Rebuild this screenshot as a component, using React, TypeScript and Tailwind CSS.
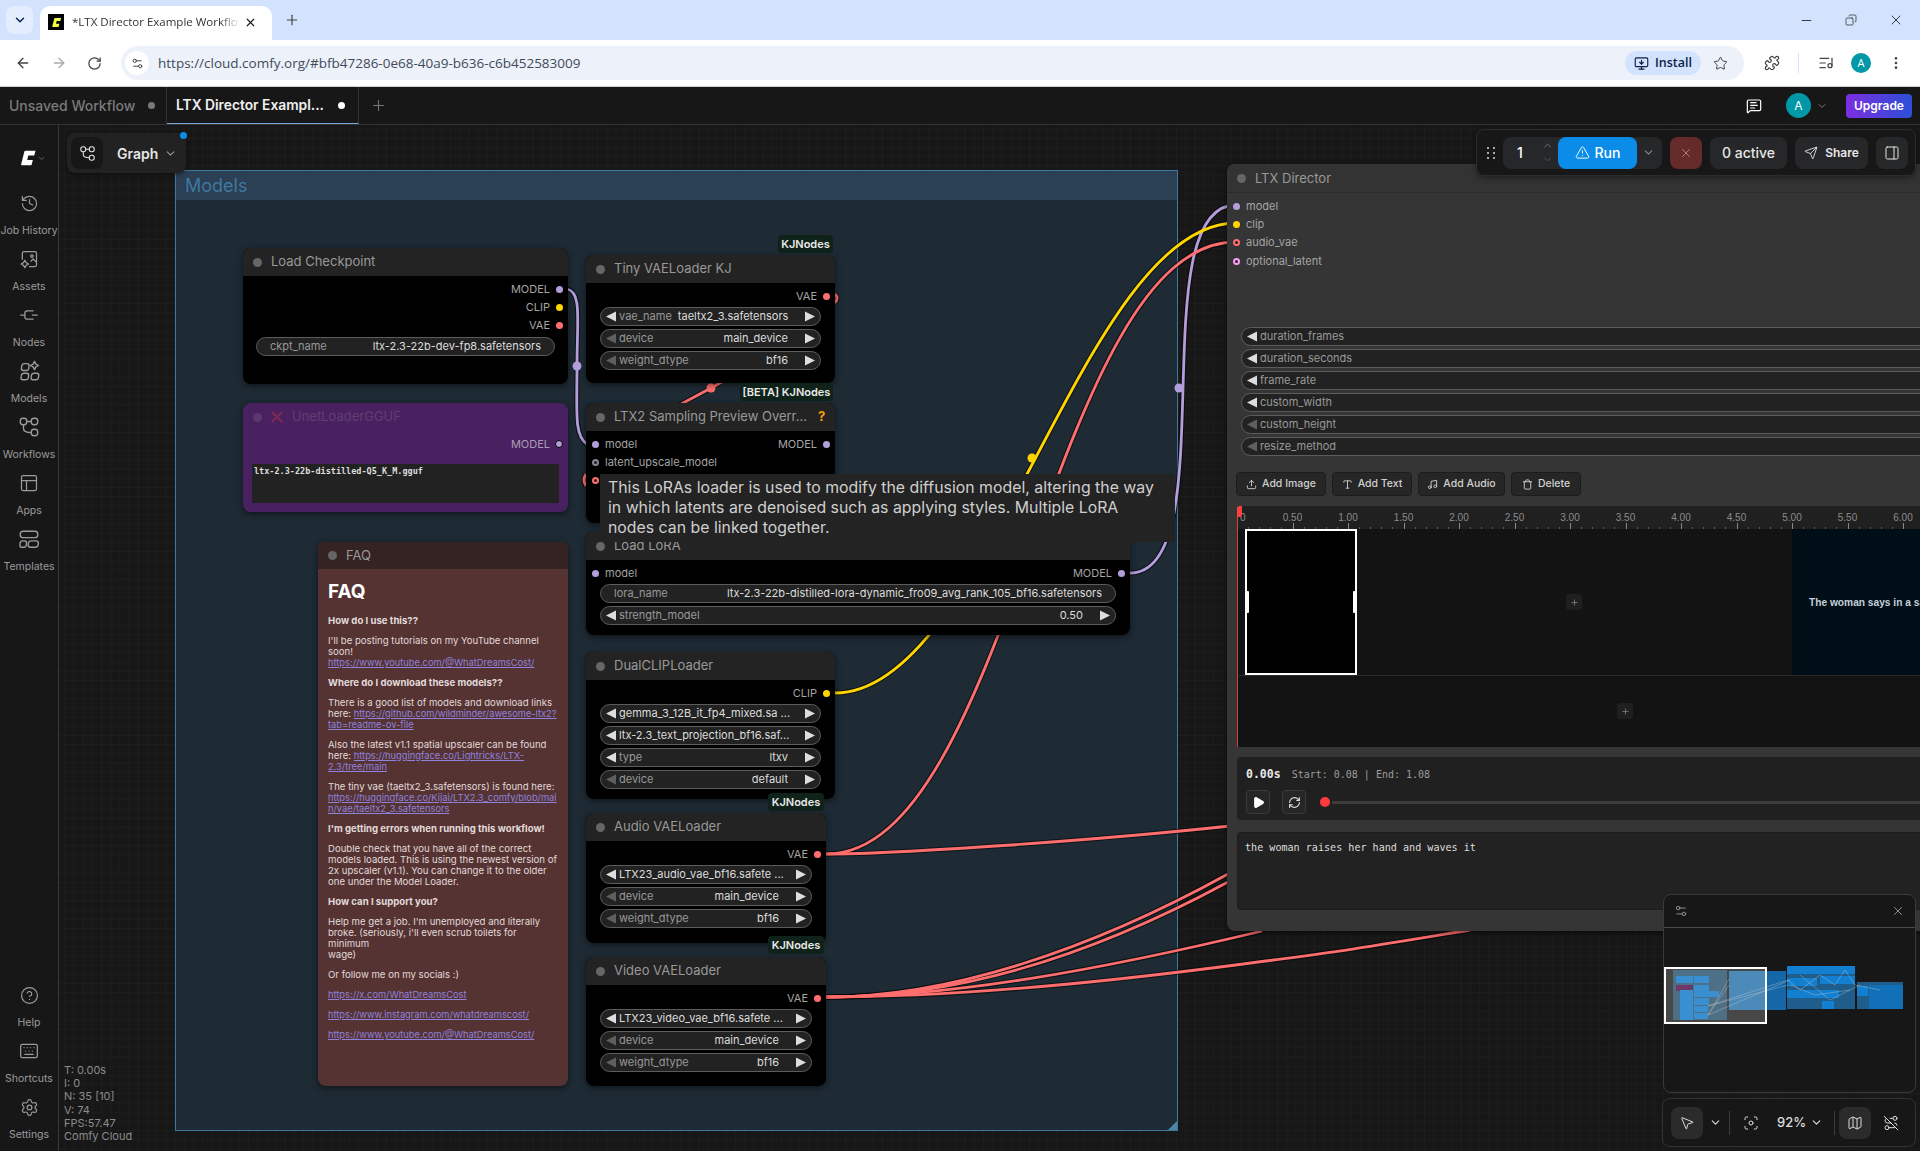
import type { ReactNode } from "react";
import {
  ArrowLeft,
  ArrowRight,
  ChevronDown,
  ChevronUp,
  CircleHelp,
  Copy,
  EllipsisVertical,
  Focus,
  History,
  Keyboard,
  ListMusic,
  Map as MapIcon,
  MessageSquareText,
  Minus,
  MonitorDown,
  MousePointer2,
  Music,
  PanelRight,
  PanelsTopLeft,
  Play,
  Plus,
  Puzzle,
  RefreshCw,
  RotateCw,
  RouteOff,
  Send,
  Settings,
  Settings2,
  Star,
  Trash,
  TriangleAlert,
  Type,
  Upload,
  X,
} from "lucide-react";

const C = {
  model: "#b39ddb",
  clip: "#ffd500",
  vae: "#ff6e6e",
  latent: "#ff9cf9",
  none: "#8a8494",
};

function ComfyLogo({ className, fill }: { className: string; fill: string }) {
  return (
    <svg viewBox="0 0 20 20" className={className} fill={fill}>
      <path d="M7.4 2h11l-1.5 5.3h-6.6l-1.2 5h6.3l-1.4 5.1q-.2.6-.9.6H3.2q-1 0-.8-1L5.9 3q.3-1 1.5-1z" />
    </svg>
  );
}

function WorkflowIcon({ className }: { className: string }) {
  return (
    <svg viewBox="0 0 24 24" className={className} fill="none" stroke="currentColor" strokeWidth={1.5}>
      <rect x="2.5" y="2.5" width="7" height="7" rx="3" />
      <rect x="14.5" y="2.5" width="7" height="7" rx="3" />
      <rect x="14.5" y="14.5" width="7" height="7" rx="3" />
      <path d="M9.5 6h5M6 9.5v4c0 3 2 4.5 8.5 4.5" />
    </svg>
  );
}

function AssetsIcon({ className }: { className: string }) {
  return (
    <svg viewBox="0 0 24 24" className={className} fill="none" stroke="currentColor" strokeWidth={1.5} strokeLinejoin="round">
      <path d="M4 13V5a2 2 0 0 1 2-2h13a2 2 0 0 1 2 2v14a2 2 0 0 1-2 2h-7" />
      <circle cx="15.5" cy="8.5" r="1.5" />
      <path d="M14 15l3-3 4 4" />
      <path d="M7 13.5l1.6 2.9L11.5 18l-2.9 1.6L7 22.5l-1.6-2.9L2.5 18l2.9-1.6z" />
    </svg>
  );
}

function NodesIcon({ className }: { className: string }) {
  return (
    <svg viewBox="0 0 24 24" className={className} fill="none" stroke="currentColor" strokeWidth={1.5} strokeLinecap="round">
      <path d="M2 12h5M16 12h6" />
      <path d="M17 7h-7q-3 0-3 3v4q0 3 3 3h7" />
    </svg>
  );
}

function ModelsIcon({ className }: { className: string }) {
  return (
    <svg viewBox="0 0 24 24" className={className} fill="none" stroke="currentColor" strokeWidth={1.5} strokeLinejoin="round">
      <rect x="3" y="4" width="8" height="7.5" rx="2.5" transform="skewX(-8) translate(2 0)" />
      <rect x="3" y="14.5" width="8" height="7" rx="2.5" transform="skewX(-8) translate(3 0)" />
      <rect x="14" y="14.5" width="8" height="7" rx="2.5" transform="skewX(-8) translate(3 0)" />
      <path d="M18 1.5l1.5 3 3 1.5-3 1.5-1.5 3-1.5-3-3-1.5 3-1.5z" />
    </svg>
  );
}

function TemplatesIcon({ className }: { className: string }) {
  return (
    <svg viewBox="0 0 24 24" className={className} fill="none" stroke="currentColor" strokeWidth={1.5}>
      <rect x="2.5" y="3.5" width="19" height="7" rx="3" />
      <rect x="2" y="14" width="7" height="7" rx="2.5" transform="skewX(-6) translate(2 0)" />
      <rect x="11" y="14" width="11" height="7" rx="3" transform="skewX(-6) translate(2 0)" />
    </svg>
  );
}

const SIDE_TOP = [
  { label: "Job History", icon: <History className="size-[19px]" strokeWidth={1.5} /> },
  { label: "Assets", icon: <AssetsIcon className="size-[20px]" /> },
  { label: "Nodes", icon: <NodesIcon className="size-[20px]" /> },
  { label: "Models", icon: <ModelsIcon className="size-[22px]" /> },
  { label: "Workflows", icon: <WorkflowIcon className="size-[22px]" /> },
  { label: "Apps", icon: <PanelsTopLeft className="size-[20px]" strokeWidth={1.5} /> },
  { label: "Templates", icon: <TemplatesIcon className="size-[22px]" /> },
];

const SIDE_BOTTOM = [
  { label: "Help", icon: <CircleHelp className="size-[19px]" strokeWidth={1.5} /> },
  { label: "Shortcuts", icon: <Keyboard className="size-[20px]" strokeWidth={1.5} /> },
  { label: "Settings", icon: <Settings className="size-[19px]" strokeWidth={1.5} /> },
];

function SideItem({ label, icon }: { label: string; icon: ReactNode }) {
  return (
    <div className="flex h-[56px] w-full flex-col items-center text-[#9b9b9b]">
      <div className="flex h-[24px] items-center justify-center">{icon}</div>
      <span className="mt-[9px] whitespace-nowrap text-[10.5px] leading-[14px]">{label}</span>
    </div>
  );
}

function Sidebar() {
  return (
    <div className="relative z-30 flex h-full w-[59px] shrink-0 flex-col border-r border-[#3a3a3a] bg-[#171718]">
      <div className="flex h-[66px] items-start justify-center pl-[6px] pt-[24px] text-[#777]">
        <ComfyLogo className="size-[18px]" fill="#fff" />
        <ChevronDown className="mt-[5px] size-[9px]" />
      </div>
      {SIDE_TOP.map((item) => (
        <SideItem key={item.label} {...item} />
      ))}
      <div className="mt-auto">
        {SIDE_BOTTOM.map((item) => (
          <SideItem key={item.label} {...item} />
        ))}
      </div>
    </div>
  );
}

function spline(x1: number, y1: number, x2: number, y2: number) {
  const d = Math.hypot(x2 - x1, y2 - y1) * 0.25;
  return `M${x1} ${y1} C${x1 + d} ${y1} ${x2 - d} ${y2} ${x2} ${y2}`;
}

const LINKS: { d: string; color: string }[] = [
  { d: "M567 289 C582 292 577 320 577 366 C577 412 574 436 587 444", color: C.model },
  { d: "M672 409 L711 388 L722 382", color: C.vae },
  { d: "M835 294 Q839 298 835 303", color: C.vae },
  { d: "M586 474 Q582 480 586 486", color: C.vae },
  { d: spline(1130, 573, 1236, 205), color: C.model },
  { d: spline(835, 693, 1236, 223), color: C.clip },
  { d: spline(826, 854, 1236, 242), color: C.vae },
  { d: "M826 854 C900 854 1100 840 1230 826", color: C.vae },
  { d: "M826 997 C950 997 1090 950 1228 874", color: C.vae },
  { d: "M826 997 C950 997 1080 962 1228 882", color: C.vae },
  { d: "M826 997 C950 997 1100 970 1262 931", color: C.vae },
  { d: "M826 997 C950 997 1080 985 1220 967 S1380 945 1470 930", color: C.vae },
];

const DOTS = [
  { x: 577, y: 366, color: C.model },
  { x: 711, y: 388, color: C.vae },
  { x: 1032, y: 458, color: C.clip },
  { x: 1179, y: 388, color: C.model },
];

function Links() {
  return (
    <svg viewBox="0 0 1920 1151" className="absolute inset-0 h-full w-full" fill="none">
      {LINKS.map((l, i) => (
        <path key={`o${i}`} d={l.d} stroke="#000" strokeOpacity={0.55} strokeWidth={5} />
      ))}
      {LINKS.map((l, i) => (
        <path key={`c${i}`} d={l.d} stroke={l.color} strokeWidth={2.8} />
      ))}
      {DOTS.map((p) => (
        <circle key={p.x} cx={p.x} cy={p.y} r={4.5} fill={p.color} />
      ))}
    </svg>
  );
}

function Tri({ dir, on = true }: { dir: "l" | "r"; on?: boolean }) {
  return (
    <svg viewBox="0 0 9 10" className="h-[11px] w-[10px] shrink-0" fill={on ? "#ddd" : "#5f5f5f"} preserveAspectRatio="none">
      <path d={dir === "l" ? "M9 0.5V9.5L0 5z" : "M0 0.5V9.5L9 5z"} />
    </svg>
  );
}

function Widget({
  label,
  value,
  leftOn = true,
  arrows = true,
}: {
  label?: string;
  value: string;
  leftOn?: boolean;
  arrows?: boolean;
}) {
  if (!arrows) {
    return (
      <div className="flex h-[19px] items-center justify-between rounded-full border border-[#5c5c5c] bg-[#222] px-[13px] text-[11px] leading-none">
        <span className="shrink-0 text-[#999]">{label}</span>
        <span className="whitespace-nowrap text-[#ddd]">{value}</span>
      </div>
    );
  }
  return (
    <div className="flex h-[19px] items-center rounded-full border border-[#5c5c5c] bg-[#222] px-[5px] text-[11px] leading-none">
      <Tri dir="l" on={leftOn} />
      {label ? (
        <>
          <span className="shrink-0 whitespace-nowrap pl-[3px] text-[#999]">{label}</span>
          <span className="ml-auto whitespace-nowrap pl-[6px] pr-[17px] text-[#ddd]">{value}</span>
        </>
      ) : (
        <span className="min-w-0 flex-1 whitespace-nowrap pl-[3px] text-[#ddd]">{value}</span>
      )}
      <Tri dir="r" />
    </div>
  );
}

function Slot({ color, hollow = false }: { color: string; hollow?: boolean }) {
  return (
    <span className="flex size-[7px] shrink-0 items-center justify-center rounded-full" style={{ backgroundColor: color }}>
      {hollow ? <span className="size-[3px] rounded-full bg-[#222]" /> : null}
    </span>
  );
}

function Row({ left, leftColor, leftHollow, right, rightColor }: { left?: string; leftColor?: string; leftHollow?: boolean; right?: string; rightColor?: string }) {
  return (
    <div className="flex h-[18.3px] items-center justify-between pl-[6px] pr-[5px] text-[11px] text-[#a4a4a4]">
      {left ? (
        <div className="flex items-center gap-[6px]">
          <Slot color={leftColor ?? C.model} hollow={leftHollow} />
          <span>{left}</span>
        </div>
      ) : (
        <span />
      )}
      {right ? (
        <div className="flex items-center gap-[6px]">
          <span>{right}</span>
          <Slot color={rightColor ?? C.model} />
        </div>
      ) : null}
    </div>
  );
}

function GraphNode({ className, title, badge, children }: { className: string; title: ReactNode; badge?: ReactNode; children: ReactNode }) {
  return (
    <div className={`absolute overflow-hidden rounded-lg bg-black shadow-[0_2px_6px_rgba(0,0,0,0.5)] ${className}`}>
      <div className="flex h-[28px] items-center gap-[9px] whitespace-nowrap bg-[#232323] pl-[10px] text-[13px] text-[#999]">
        <span className="size-[9px] shrink-0 rounded-full bg-[#666]" />
        {title}
        {badge}
      </div>
      <div className="pt-[4px]">{children}</div>
    </div>
  );
}

function Badge({ className, children }: { className: string; children: ReactNode }) {
  return (
    <div className={`absolute flex h-[18px] items-center justify-center rounded bg-[#10231a] text-[11px] font-semibold text-[#e8e8e8] ${className}`}>
      {children}
    </div>
  );
}

function Widgets({ children, className = "mx-[14px]" }: { children: ReactNode; className?: string }) {
  return <div className={`mt-[2px] flex flex-col gap-[3px] ${className}`}>{children}</div>;
}

function Faq() {
  const link = "whitespace-nowrap text-[9.3px] text-[#8f82dd] underline";
  return (
    <div className="absolute left-[318px] top-[542px] h-[544px] w-[250px] overflow-hidden rounded-lg bg-[#553333] shadow-[0_2px_6px_rgba(0,0,0,0.5)]">
      <div className="flex h-[27px] items-center gap-[9px] bg-[#352222] pl-[10px] text-[13px] text-[#999]">
        <span className="size-[9px] rounded-full bg-[#666]" />
        FAQ
      </div>
      <div className="flex flex-col gap-[9px] pl-[10px] pr-[10px] pt-[13px] text-[9.6px] leading-[11px] text-[#e2dada]">
        <h1 className="mb-[4px] text-[19px] font-bold leading-[20px] text-white">FAQ</h1>
        <p className="font-bold">How do I use this??</p>
        <p>
          I'll be posting tutorials on my YouTube channel
          <br />
          soon!
          <br />
          <span className={link}>https://www.youtube.com/@WhatDreamsCost/</span>
        </p>
        <p className="font-bold">Where do I download these models??</p>
        <p>
          There is a good list of models and download links
          <br />
          here: <span className={link}>https://github.com/wildminder/awesome-ltx2?</span>
          <br />
          <span className={link}>tab=readme-ov-file</span>
        </p>
        <p>
          Also the latest v1.1 spatial upscaler can be found
          <br />
          here: <span className={link}>https://huggingface.co/Lightricks/LTX-</span>
          <br />
          <span className={link}>2.3/tree/main</span>
        </p>
        <p>
          The tiny vae (taeltx2_3.safetensors) is found here:
          <br />
          <span className={link}>https://huggingface.co/Kijai/LTX2.3_comfy/blob/mai</span>
          <br />
          <span className={link}>n/vae/taeltx2_3.safetensors</span>
        </p>
        <p className="font-bold">I'm getting errors when running this workflow!</p>
        <p>
          Double check that you have all of the correct
          <br />
          models loaded. This is using the newest version of
          <br />
          2x upscaler (v1.1). You can change it to the older
          <br />
          one under the Model Loader.
        </p>
        <p className="font-bold">How can I support you?</p>
        <p>
          Help me get a job. I'm unemployed and literally
          <br />
          broke. (seriously, i'll even scrub toilets for minimum
          <br />
          wage)
        </p>
        <p>Or follow me on my socials :)</p>
        <p className={link}>https://x.com/WhatDreamsCost</p>
        <p className={link}>https://www.instagram.com/whatdreamscost/</p>
        <p className={link}>https://www.youtube.com/@WhatDreamsCost/</p>
      </div>
    </div>
  );
}

const DIRECTOR_WIDGETS: { label: string; on: boolean }[] = [
  { label: "duration_frames", on: true },
  { label: "duration_seconds", on: true },
  { label: "frame_rate", on: true },
  { label: "custom_width", on: true },
  { label: "custom_height", on: false },
  { label: "resize_method", on: false },
];

const RULER = Array.from({ length: 61 }, (_, i) => i);

function ToolBtn({ icon, label, className }: { icon: ReactNode; label: string; className: string }) {
  return (
    <div className={`flex h-[24px] items-center justify-center gap-[5px] rounded border border-[#1c1c1c] bg-[#262626] text-[10.5px] font-medium text-[#cfcfcf] ${className}`}>
      {icon}
      {label}
    </div>
  );
}

function Timeline() {
  return (
    <div className="relative mt-[10px] h-[241px] w-[1000px] overflow-hidden rounded-t-[3px] bg-[#131313]">
      <div className="relative h-[23px] bg-[#202020] font-['Liberation_Sans',sans-serif] text-[10px] text-[#8c8c8c]">
        {RULER.map((i) => (
          <div key={i}>
            <span className={`absolute bottom-0 w-px ${i % 5 === 0 ? "h-[6px] bg-[#8a8a8a]" : "h-[2px] bg-[#5a5a5a]"}`} style={{ left: i * 11.1 }} />
            {i % 5 === 0 ? (
              <span className={`absolute top-[4px] ${i === 0 ? "left-[3px]" : "-translate-x-1/2"}`} style={i === 0 ? undefined : { left: i * 11.1 }}>
                {i === 0 ? "0" : (i / 10).toFixed(2)}
              </span>
            ) : null}
          </div>
        ))}
      </div>
      <div className="relative h-[147px] border-b border-[#2a2a2a]">
        <div className="absolute bottom-0 left-[8px] top-0 w-[112px] border-2 border-white bg-black">
          <span className="absolute -left-[1px] top-[60px] h-[22px] w-[3px] rounded-[1px] bg-white" />
          <span className="absolute -right-[1px] top-[60px] h-[22px] w-[3px] rounded-[1px] bg-white" />
        </div>
        <div className="absolute left-[329px] top-[65px] flex size-[16px] items-center justify-center rounded-[3px] bg-[#1f1f1f] text-[#888]">
          <Plus className="size-[9px]" />
        </div>
        <div className="absolute bottom-0 left-[555px] top-0 flex w-[300px] items-center border-l border-[#0a0a0a] bg-[#000f17] pl-[16px] font-['Liberation_Sans',sans-serif] text-[10.2px] font-bold text-[#c5cfdb]">
          The woman says in a sad
        </div>
      </div>
      <div className="relative h-[71px]">
        <div className="absolute left-[380px] top-[27px] flex size-[16px] items-center justify-center rounded-[3px] bg-[#1f1f1f] text-[#888]">
          <Plus className="size-[9px]" />
        </div>
      </div>
      <div className="absolute bottom-0 left-0 top-0 w-px bg-[#e03a3a]" />
      <div className="absolute left-0 top-0 h-[11px] w-[5px] rounded-br-[3px] bg-[#ff4040]" />
    </div>
  );
}

function Director() {
  return (
    <div className="absolute left-[1227px] top-[164px] h-[767px] w-[1000px] overflow-hidden rounded-lg bg-[#353535] shadow-[0_2px_6px_rgba(0,0,0,0.5)]">
      <div className="flex h-[29px] items-center gap-[9px] border-b border-[#2c2c2c] bg-[#333] pl-[10px] pt-[1px] text-[13px] text-[#999]">
        <span className="size-[9px] rounded-full bg-[#666]" />
        LTX Director
      </div>
      <div className="pt-[4px]">
        <Row left="model" leftColor={C.model} />
        <Row left="clip" leftColor={C.clip} />
        <Row left="audio_vae" leftColor={C.vae} leftHollow />
        <Row left="optional_latent" leftColor={C.latent} leftHollow />
      </div>
      <div className="ml-[14px] mt-[57px] flex flex-col gap-[3px]">
        {DIRECTOR_WIDGETS.map((w) => (
          <div key={w.label} className="flex h-[19px] items-center gap-[3px] rounded-full border border-[#5c5c5c] bg-[#222] pl-[5px] text-[11px] text-[#999]">
            <Tri dir="l" on={w.on} />
            {w.label}
          </div>
        ))}
      </div>
      <div className="ml-[9px] mt-[16px] flex gap-[6px]">
        <ToolBtn className="w-[90px]" label="Add Image" icon={<Upload className="size-[11px]" />} />
        <ToolBtn className="w-[80px]" label="Add Text" icon={<Type className="size-[11px]" />} />
        <ToolBtn className="w-[87px]" label="Add Audio" icon={<Music className="size-[11px]" />} />
        <ToolBtn className="w-[70px]" label="Delete" icon={<Trash className="size-[11px]" />} />
      </div>
      <div className="ml-[10px]">
        <Timeline />
        <div className="mt-[10px] h-[63px] rounded bg-[#202020] pl-[9px] pt-[9px] font-['DejaVu_Sans_Mono',monospace]">
          <div className="flex items-baseline gap-[11px] text-[#9c9c9c]">
            <span className="text-[11.5px] font-bold text-[#e8e8e8]">0.00s</span>
            <span className="text-[10px]">Start: 0.08 | End: 1.08</span>
          </div>
          <div className="mt-[7px] flex items-center">
            <div className="flex h-[24px] w-[24px] items-center justify-center rounded border border-[#3a3a3a] bg-[#262626]">
              <Play className="size-[13px]" fill="#fff" color="#fff" />
            </div>
            <div className="ml-[12px] flex h-[24px] w-[24px] items-center justify-center rounded border border-[#3a3a3a] bg-[#262626] text-[#ddd]">
              <RefreshCw className="size-[13px]" />
            </div>
            <span className="ml-[14px] size-[10px] rounded-full bg-[#ff3b3b]" />
            <span className="ml-[2px] h-[3px] flex-1 bg-[#3c3c3c]" />
          </div>
        </div>
        <div className="mt-[12px] h-[78px] rounded border border-[#1c1c1c] bg-[#222] pl-[7px] pt-[7px] font-['DejaVu_Sans_Mono',monospace] text-[10.1px] text-[#ddd]">
          the woman raises her hand and waves it
        </div>
      </div>
    </div>
  );
}

function MiniMap() {
  return (
    <div className="absolute left-[1663px] top-[894px] z-20 flex h-[199px] w-[253px] flex-col rounded-lg border border-[#3a3a3a] bg-[#171717]">
      <div className="flex h-[33px] items-center justify-between border-b border-[#4a4a4a] px-[10px] text-[#a0a0a0]">
        <Settings2 className="size-[14px]" strokeWidth={1.5} />
        <X className="size-[14px]" strokeWidth={1.5} />
      </div>
      <svg viewBox="1664 928 251 164" className="flex-1" fill="none">
        <rect x="1665" y="968" width="101" height="55" fill="#474747" />
        <rect x="1673" y="970" width="54" height="50" fill="#4e7087" />
        <rect x="1676" y="976" width="17" height="7" fill="#3a8fd0" />
        <rect x="1694" y="976" width="15" height="7" fill="#3a8fd0" />
        <rect x="1676" y="985" width="17" height="6" fill="#6d3a68" />
        <rect x="1694" y="985" width="15" height="7" fill="#3a8fd0" />
        <rect x="1680" y="991" width="13" height="30" fill="#3a8fd0" transform="translate(0 -1)" />
        <rect x="1694" y="991" width="25" height="6" fill="#3a8fd0" />
        <rect x="1694" y="998" width="15" height="7" fill="#3a8fd0" />
        <rect x="1694" y="1006" width="14" height="6" fill="#3a8fd0" />
        <rect x="1694" y="1013" width="14" height="6" fill="#3a8fd0" />
        <rect x="1729" y="971" width="37" height="39" fill="#4b8ab9" />
        <rect x="1766" y="971" width="20" height="39" fill="#1567a8" />
        <rect x="1787" y="966" width="68" height="43" fill="#1f5d8c" />
        <rect x="1787" y="966" width="68" height="8" fill="#127fd0" />
        <rect x="1787" y="978" width="30" height="8" fill="#127fd0" />
        <rect x="1820" y="976" width="35" height="8" fill="#127fd0" />
        <rect x="1787" y="990" width="52" height="8" fill="#127fd0" />
        <rect x="1822" y="1001" width="12" height="8" fill="#127fd0" />
        <rect x="1857" y="982" width="46" height="27" fill="#1f5d8c" />
        <rect x="1869" y="985" width="34" height="24" fill="#1170b8" />
        <rect x="1857" y="986" width="11" height="10" fill="#127fd0" />
        <g stroke="#d8d8d8" strokeOpacity={0.55} strokeWidth={0.6}>
          <path d="M1708 1015L1729 979M1708 1015L1729 985M1708 1006L1788 980M1708 1015L1790 980M1708 1006L1788 985" />
          <path d="M1788 980L1800 990L1820 975L1835 985L1845 970L1855 985L1880 990M1790 985L1815 995L1850 990M1800 975L1830 1000L1860 985" />
        </g>
        <rect x="1665" y="968" width="101" height="55" stroke="#fff" strokeWidth={2} />
      </svg>
    </div>
  );
}

function CanvasToolbar() {
  return (
    <div className="absolute left-[1662px] top-[1098px] z-20 flex h-[49px] w-[254px] items-center rounded-lg border border-[#333] bg-[#171717] pl-[8px] text-[#ddd]">
      <div className="flex size-[32px] shrink-0 items-center justify-center rounded-lg bg-[#2b2b2b]">
        <MousePointer2 className="size-[16px]" strokeWidth={1.5} />
      </div>
      <ChevronDown className="ml-[5.5px] size-[13px] shrink-0" />
      <span className="ml-[7.5px] h-[24px] w-px shrink-0 bg-[#3a3a3a]" />
      <Focus className="ml-[13px] size-[16px] shrink-0" strokeWidth={1.5} />
      <span className="ml-[18px] w-[27px] text-[13px] font-medium">92%</span>
      <ChevronDown className="ml-[5.5px] size-[13px] shrink-0" />
      <span className="ml-[11px] h-[24px] w-px shrink-0 bg-[#3a3a3a]" />
      <div className="ml-[4px] flex size-[32px] shrink-0 items-center justify-center rounded-lg bg-[#2b2b2b]">
        <MapIcon className="size-[16px]" strokeWidth={1.5} />
      </div>
      <RouteOff className="ml-[12px] size-[16px] shrink-0" strokeWidth={1.5} />
    </div>
  );
}

function RunBar() {
  const chip = "flex h-[32px] items-center justify-center rounded-lg bg-[#262729] text-[#e6e6e6]";
  return (
    <div className="absolute left-[1476px] top-[129px] z-20 flex h-[47px] w-[440px] items-center gap-[8px] rounded-lg border border-[#2c2c2c] bg-[#171717] pl-[10px] shadow-[0_2px_6px_rgba(0,0,0,0.4)]">
      <div className="grid w-[8px] grid-cols-2 gap-x-[3px] gap-y-[3px]">
        {[0, 1, 2, 3, 4, 5].map((i) => (
          <span key={i} className="size-[2px] bg-[#aaa]" />
        ))}
      </div>
      <div className="flex h-[32px] w-[159px] items-center rounded-lg bg-[#262729] text-white">
        <span className="w-[33px] pl-[14px] text-[14px] font-medium">1</span>
        <div className="ml-[4px] flex w-[14px] flex-col items-center text-[#7d7d7d]">
          <ChevronUp className="size-[11px]" />
          <ChevronDown className="mt-[3px] size-[11px] text-[#555]" />
        </div>
        <div className="ml-[4px] flex h-[32px] w-[79px] items-center justify-center gap-[5px] rounded-lg bg-[#0b8ce9] text-[14px] font-medium text-white">
          <TriangleAlert className="size-[15px]" strokeWidth={1.5} />
          Run
        </div>
        <ChevronDown className="ml-[5px] size-[13px] text-[#888]" />
      </div>
      <div className="flex size-[32px] items-center justify-center rounded-lg bg-[#652a2a] text-[#b08a8a]">
        <X className="size-[14px]" strokeWidth={1.5} />
      </div>
      <div className={`${chip} w-[77px] text-[14px] font-medium`}>0 active</div>
      <div className={`${chip} w-[73px] gap-[7px] text-[12px] font-semibold`}>
        <Send className="size-[14px]" strokeWidth={1.5} />
        Share
      </div>
      <div className={`${chip} w-[32px]`}>
        <PanelRight className="size-[16px]" strokeWidth={1.5} />
      </div>
    </div>
  );
}

function Canvas() {
  return (
    <div className="relative flex-1 overflow-hidden bg-[#171717]">
      <div className="absolute left-[-59px] top-[-125px] h-[1151px] w-[1920px] bg-[linear-gradient(#1d1d1d_1px,transparent_1px),linear-gradient(90deg,#1d1d1d_1px,transparent_1px)] bg-[size:9.2px_9.2px]">
        <div className="absolute left-[175px] top-[170px] h-[961px] w-[1003px] border border-[#3f789e] bg-[#1f2c37]/90">
          <div className="h-[29px] bg-[#2b3f55] pl-[9px] text-[18px] leading-[29px] text-[#3f789e]">Models</div>
          <div className="absolute bottom-0 right-0 size-0 border-b-[9px] border-l-[9px] border-b-[#4f85a8] border-l-transparent" />
        </div>

        <Links />

        <GraphNode className="left-[243px] top-[248px] h-[136px] w-[325px]" title="Load Checkpoint">
          <Row right="MODEL" rightColor={C.model} />
          <Row right="CLIP" rightColor={C.clip} />
          <Row right="VAE" rightColor={C.vae} />
          <Widgets className="mx-[13px]">
            <Widget label="ckpt_name" value="ltx-2.3-22b-dev-fp8.safetensors" arrows={false} />
          </Widgets>
        </GraphNode>

        <div className="absolute left-[243px] top-[403px] h-[109px] w-[325px] overflow-hidden rounded-lg bg-[#4a2160] shadow-[0_2px_6px_rgba(0,0,0,0.5)]">
          <div className="flex h-[28px] items-center gap-[6px] pl-[10px] text-[13px] text-[#5e3f72]">
            <span className="size-[9px] rounded-full bg-[#5a3a6c]" />
            <span className="text-[#7b2a55]">
              <X className="size-[18px]" strokeWidth={3} />
            </span>
            UnetLoaderGGUF
          </div>
          <div className="pb-[11px] pt-[4px]">
            <div className="flex h-[18px] items-center justify-end gap-[5px] px-[5px] text-[11px] text-[#a99bb3]">
              MODEL
              <span className="flex size-[8px] rounded-full border border-black bg-[#b39ddb]" />
            </div>
          </div>
          <div className="mx-[9px] h-[39px] bg-[#222] px-[2px] pt-[1px] font-['DejaVu_Sans_Mono',monospace] text-[8.5px] font-bold leading-[12px] text-[#ddd]">
            ltx-2.3-22b-distilled-Q5_K_M.gguf
          </div>
        </div>

        <Faq />

        <Badge className="left-[778px] top-[235px] w-[55px]">KJNodes</Badge>
        <GraphNode className="left-[586px] top-[255px] h-[128px] w-[249px]" title="Tiny VAELoader KJ">
          <Row right="VAE" rightColor={C.vae} />
          <Widgets>
            <Widget label="vae_name" value="taeltx2_3.safetensors" />
            <Widget label="device" value="main_device" leftOn={false} />
            <Widget label="weight_dtype" value="bf16" leftOn={false} />
          </Widgets>
        </GraphNode>

        <Badge className="left-[740px] top-[383px] w-[93px]">[BETA] KJNodes</Badge>
        <GraphNode
          className="left-[586px] top-[403px] h-[120px] w-[249px]"
          title="LTX2 Sampling Preview Overr..."
          badge={<span className="ml-[2px] font-bold text-[#f59e0b]">?</span>}
        >
          <Row left="model" leftColor={C.model} right="MODEL" rightColor={C.model} />
          <Row left="latent_upscale_model" leftColor={C.none} leftHollow />
          <Row left="vae" leftColor={C.vae} leftHollow />
        </GraphNode>

        <GraphNode className="left-[586px] top-[532px] h-[103px] w-[544px]" title="Load LoRA">
          <Row left="model" leftColor={C.model} right="MODEL" rightColor={C.model} />
          <Widgets>
            <Widget label="lora_name" value="ltx-2.3-22b-distilled-lora-dynamic_fro09_avg_rank_105_bf16.safetensors" arrows={false} />
            <Widget label="strength_model" value="0.50" />
          </Widgets>
        </GraphNode>

        <GraphNode className="left-[586px] top-[652px] h-[147px] w-[249px]" title="DualCLIPLoader">
          <Row right="CLIP" rightColor={C.clip} />
          <Widgets>
            <Widget value="gemma_3_12B_it_fp4_mixed.sa ..." />
            <Widget value="ltx-2.3_text_projection_bf16.saf..." />
            <Widget label="type" value="ltxv" />
            <Widget label="device" value="default" leftOn={false} />
          </Widgets>
        </GraphNode>

        <Badge className="left-[768px] top-[793px] w-[56px]">KJNodes</Badge>
        <GraphNode className="left-[586px] top-[813px] h-[130px] w-[240px]" title="Audio VAELoader">
          <Row right="VAE" rightColor={C.vae} />
          <Widgets>
            <Widget value="LTX23_audio_vae_bf16.safete ..." />
            <Widget label="device" value="main_device" leftOn={false} />
            <Widget label="weight_dtype" value="bf16" leftOn={false} />
          </Widgets>
        </GraphNode>

        <GraphNode className="left-[586px] top-[957px] h-[129px] w-[240px]" title="Video VAELoader">
          <Row right="VAE" rightColor={C.vae} />
          <Widgets>
            <Widget value="LTX23_video_vae_bf16.safete ..." />
            <Widget label="device" value="main_device" leftOn={false} />
            <Widget label="weight_dtype" value="bf16" leftOn={false} />
          </Widgets>
        </GraphNode>
        <Badge className="left-[768px] top-[936px] w-[56px]">KJNodes</Badge>

        <div className="absolute left-[600px] top-[474px] h-[68px] w-[575px] bg-[#232323] px-[8px] py-[4px] text-[15.85px] leading-[20px] text-[#cfcfcf]">
          This LoRAs loader is used to modify the diffusion model, altering the way in which latents are denoised such as applying styles. Multiple LoRA nodes can be linked together.
        </div>

        <Director />
        <RunBar />
        <MiniMap />
        <CanvasToolbar />

        <div className="absolute left-[64px] top-[1064px] text-[11px] leading-[13.2px] text-[#8c8c8c]">
          <div>T: 0.00s</div>
          <div>I: 0</div>
          <div>N: 35 [10]</div>
          <div>V: 74</div>
          <div>FPS:57.47</div>
          <div>Comfy Cloud</div>
        </div>

        <div className="absolute left-[67px] top-[133px] z-20 flex h-[40px] w-[119px] items-center rounded-lg bg-[#222] pl-[4px] shadow-[0_2px_4px_rgba(0,0,0,0.4)]">
          <div className="flex size-[32px] items-center justify-center rounded-lg bg-[#171717] text-[#e6e6e6]">
            <WorkflowIcon className="size-[17px]" />
          </div>
          <span className="ml-[14px] text-[14px] font-semibold text-[#e6e6e6]">Graph</span>
          <ChevronDown className="ml-[6px] size-[13px] text-[#999]" />
          <span className="absolute -right-[1px] -top-[1px] size-[7px] rounded-full bg-[#0b8ce9]" />
        </div>
      </div>
    </div>
  );
}

function BrowserChrome() {
  return (
    <div className="shrink-0 font-['Open_Sans',sans-serif] text-[#1f1f1f]">
      <div className="flex h-[40px] items-end bg-[#d3e3fd]">
        <div className="mb-[6px] ml-[6px] flex h-[28px] w-[27px] items-center justify-center rounded-lg bg-[#e3edfd] text-[#0b1f4a]">
          <ChevronDown className="size-[14px]" strokeWidth={2.5} />
        </div>
        <div className="ml-[7px] flex h-[34px] w-[232px] items-center rounded-t-[10px] bg-white pb-[2px] pl-[8px]">
          <div className="flex size-[16px] items-center justify-center bg-black">
            <ComfyLogo className="size-[11px]" fill="#f0ff41" />
          </div>
          <span className="ml-[8px] w-[168px] overflow-hidden whitespace-nowrap text-[11.5px] text-[#333] [mask-image:linear-gradient(90deg,#000_88%,transparent)]">
            *LTX Director Example Workflow
          </span>
          <X className="ml-[4px] size-[13px]" strokeWidth={2.2} />
        </div>
        <Plus className="mb-[12px] ml-[12px] size-[16px] text-[#444]" strokeWidth={1.8} />
        <div className="mb-[12px] ml-auto flex items-center gap-[31px] pr-[16px] text-[#222]">
          <Minus className="size-[15px]" strokeWidth={1.4} />
          <Copy className="size-[12px] -scale-x-100" strokeWidth={1.4} />
          <X className="size-[16px]" strokeWidth={1.3} />
        </div>
      </div>
      <div className="flex h-[47px] items-center border-b border-[#d0d0d0] bg-white text-[#444]">
        <ArrowLeft className="ml-[15px] size-[16px]" />
        <ArrowRight className="ml-[20px] size-[16px] text-[#aaa]" />
        <RotateCw className="ml-[20px] size-[15px]" />
        <div className="ml-[19px] flex h-[34px] w-[1623px] items-center rounded-full bg-[#edf2fa]">
          <div className="ml-[4px] flex size-[24px] items-center justify-center rounded-full bg-white">
            <Settings2 className="size-[13px]" strokeWidth={1.8} />
          </div>
          <span className="ml-[9px] text-[13.5px] text-[#3f4a59]">https://cloud.comfy.org/#bfb47286-0e68-40a9-b636-c6b452583009</span>
          <div className="ml-auto flex h-[24px] w-[76px] items-center justify-center gap-[6px] rounded-full bg-[#d3e3fd] text-[12.5px] font-semibold text-[#0b1f4a]">
            <MonitorDown className="size-[15px]" strokeWidth={1.8} />
            Install
          </div>
          <Star className="ml-[12px] mr-[16px] size-[15px]" strokeWidth={1.6} />
        </div>
        <Puzzle className="ml-[20px] size-[16px]" strokeWidth={1.8} />
        <span className="ml-[18px] h-[20px] w-px bg-[#d3e3fd]" />
        <ListMusic className="ml-[19px] size-[16px]" strokeWidth={1.8} />
        <span className="ml-[17px] flex size-[20px] items-center justify-center rounded-full bg-[#0097a7] text-[11px] text-white">A</span>
        <EllipsisVertical className="ml-[17px] size-[16px]" />
      </div>
    </div>
  );
}

function AppTabs() {
  return (
    <div className="relative z-40 flex h-[38px] shrink-0 items-stretch border-b border-[#333] bg-[#171718]">
      <div className="flex w-[167px] items-center border-r border-[#333] pl-[9px] text-[14px] font-medium text-[#7a7a7a]">
        Unsaved Workflow
        <span className="ml-[13px] size-[7px] rounded-full bg-[#7a7a7a]" />
      </div>
      <div className="flex w-[192px] items-center border-b border-r border-b-[#7aa6d8] border-r-[#333] pl-[9px] text-[13.8px] font-semibold text-[#f0f0f0]">
        LTX Director Exampl...
        <span className="ml-[14px] size-[7px] rounded-full bg-white" />
      </div>
      <Plus className="ml-[11px] size-[17px] self-center text-[#777]" strokeWidth={1.5} />
      <div className="ml-auto flex items-center pr-[8px]">
        <MessageSquareText className="size-[16px] text-white" strokeWidth={1.8} />
        <span className="ml-[24px] flex size-[25px] items-center justify-center rounded-full bg-[#0097a7] text-[12px] text-white">A</span>
        <ChevronDown className="ml-[5px] size-[12px] text-[#777]" />
        <div className="ml-[18px] flex h-[24px] w-[66px] items-center justify-center rounded-[4px] bg-[linear-gradient(90deg,#7b2ee0,#2c4fd6)] text-[12px] font-semibold text-white">
          Upgrade
        </div>
      </div>
    </div>
  );
}

export default function App() {
  return (
    <div className="flex h-[1151px] w-[1920px] flex-col overflow-hidden bg-[#171717] font-['Inter',sans-serif]">
      <BrowserChrome />
      <AppTabs />
      <div className="flex min-h-0 flex-1">
        <Sidebar />
        <Canvas />
      </div>
    </div>
  );
}
